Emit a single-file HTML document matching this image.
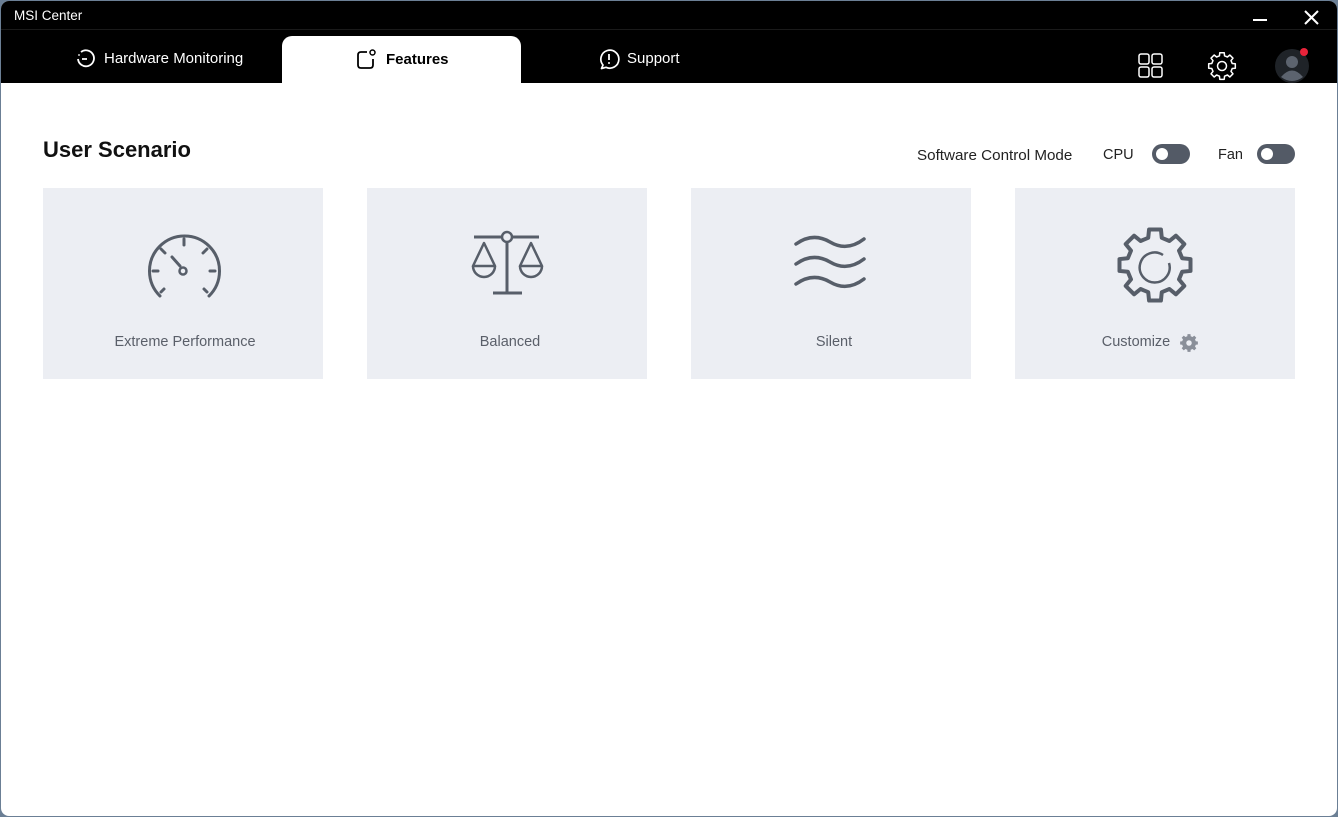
<!DOCTYPE html>
<html><head><meta charset="utf-8"><style>
*{margin:0;padding:0;box-sizing:border-box}
body{width:1338px;height:817px;background:#6b7f95;font-family:"Liberation Sans",sans-serif;overflow:hidden;position:relative}
.win{position:absolute;left:1px;top:1px;width:1336px;height:815px;background:#fff;border-radius:8px;overflow:hidden}
.top{position:absolute;left:0;top:0;width:100%;height:82px;background:#000}
.sep{position:absolute;left:0;top:28px;width:100%;height:1px;background:#1a1a1a}
.t{position:absolute;color:#fff;font-size:14px}
.tab{position:absolute;left:281px;top:35px;width:239px;height:48px;background:#fff;border-radius:10px 10px 0 0}
.card{position:absolute;top:187px;width:280px;height:191px;background:#eceef3}
.lbl{position:absolute;top:146px;width:100%;text-align:center;font-size:14.5px;color:#5a5f69}
.card svg{position:absolute;left:0;top:0}
.tg{position:absolute;top:143px;width:38px;height:20px;border-radius:10px;background:#535a66}
.tg::after{content:"";position:absolute;left:4px;top:4px;width:12px;height:12px;border-radius:50%;background:#fff}
.sm{position:absolute;font-size:14.5px;color:#222;top:146px}
</style></head><body>
<svg width="0" height="0" style="position:absolute"><defs>
<symbol id="gear" viewBox="-40 -40 80 80"><polygon fill="none" stroke="currentColor" stroke-width="4" stroke-linejoin="round" points="-6.77,-27.17 -5.94,-35.5 5.94,-35.5 6.77,-27.17 14.42,-24 20.9,-29.3 29.3,-20.9 24,-14.42 27.17,-6.77 35.5,-5.94 35.5,5.94 27.17,6.77 24,14.42 29.3,20.9 20.9,29.3 14.42,24 6.77,27.17 5.94,35.5 -5.94,35.5 -6.77,27.17 -14.42,24 -20.9,29.3 -29.3,20.9 -24,14.42 -27.17,6.77 -35.5,5.94 -35.5,-5.94 -27.17,-6.77 -24,-14.42 -29.3,-20.9 -20.9,-29.3 -14.42,-24"/></symbol>
</defs></svg>
<div class="win">
<div class="top"></div><div class="sep"></div>
<div class="t" style="left:13px;top:7px;font-size:13.5px">MSI Center</div>
<svg style="position:absolute;left:1250px;top:6px" width="80" height="22"><line x1="2" y1="13" x2="16" y2="13" stroke="#fff" stroke-width="2"/><line x1="54" y1="4" x2="67" y2="17" stroke="#fff" stroke-width="2"/><line x1="67" y1="4" x2="54" y2="17" stroke="#fff" stroke-width="2"/></svg>
<svg style="position:absolute;left:74px;top:47px" width="22" height="22"><path d="M6 4 A8 8 0 1 1 3 11" fill="none" stroke="#fff" stroke-width="1.8"/><line x1="7" y1="11" x2="12" y2="11" stroke="#fff" stroke-width="1.8"/><circle cx="4" cy="7" r="0.9" fill="#fff"/></svg>
<div class="t" style="left:103px;top:49px;font-size:15px">Hardware Monitoring</div>
<div class="tab"></div>
<svg style="position:absolute;left:355px;top:47px" width="22" height="22"><path d="M11 4 H5 Q2 4 2 7 V17 Q2 20 5 20 H14 Q17 20 17 17 V11" fill="none" stroke="#000" stroke-width="1.8"/><circle cx="16.5" cy="4.5" r="2.5" fill="none" stroke="#000" stroke-width="1.5"/></svg>
<div class="t" style="left:385px;top:50px;font-size:15px;color:#000;font-weight:bold">Features</div>
<svg style="position:absolute;left:597px;top:47px" width="22" height="22"><path d="M5 17 A9 9 0 1 1 8 19.3 L3.5 20.5 Z" fill="none" stroke="#fff" stroke-width="1.7" stroke-linejoin="round"/><line x1="11" y1="6" x2="11" y2="12" stroke="#fff" stroke-width="1.8"/><circle cx="11" cy="15" r="1" fill="#fff"/></svg>
<div class="t" style="left:626px;top:49px;font-size:15px">Support</div>
<svg style="position:absolute;left:1136px;top:51px" width="28" height="28"><g fill="none" stroke="#fff" stroke-width="1.5"><rect x="2" y="2" width="10" height="10" rx="2"/><rect x="15" y="2" width="10" height="10" rx="2"/><rect x="2" y="15" width="10" height="10" rx="2"/><rect x="15" y="15" width="10" height="10" rx="2"/></g></svg>
<svg style="position:absolute;left:1206px;top:50px;color:#fff" width="30" height="30"><use href="#gear" width="30" height="30"/><circle cx="15" cy="15" r="4.5" fill="none" stroke="#fff" stroke-width="1.5"/></svg>
<svg style="position:absolute;left:1273px;top:45px" width="40" height="40"><circle cx="18" cy="20" r="17" fill="#1f2328"/><circle cx="18" cy="16" r="6" fill="#5c636e"/><path d="M7 31 Q18 18 29 31 Q18 39 7 31Z" fill="#5c636e"/><circle cx="30" cy="6" r="4" fill="#e8233a"/></svg>
<div style="position:absolute;left:42px;top:136px;font-size:22px;font-weight:bold;color:#111">User Scenario</div>
<div class="sm" style="left:916px;font-size:15.2px">Software Control Mode</div>
<div class="sm" style="left:1102px">CPU</div><div class="tg" style="left:1151px"></div>
<div class="sm" style="left:1217px">Fan</div><div class="tg" style="left:1256px"></div>
<div class="card" style="left:42px"><svg width="280" height="130"><g stroke="#575e69" stroke-width="3" fill="none" stroke-linecap="round"><path d="M117 108 A35 35 0 1 1 166 108"/><line x1="141" y1="51" x2="141" y2="57"/><line x1="118" y1="61" x2="122" y2="65"/><line x1="164" y1="61" x2="160" y2="65"/><line x1="110" y1="83" x2="115" y2="83"/><line x1="172" y1="83" x2="167" y2="83"/><line x1="121" y1="101" x2="118" y2="104"/><line x1="161" y1="101" x2="164" y2="104"/><line x1="129" y1="69" x2="137" y2="78"/><circle cx="140" cy="83" r="3.5" stroke-width="2.5"/></g></svg><div class="lbl" style="left:2px">Extreme Performance</div></div>
<div class="card" style="left:366px"><svg width="280" height="130"><g stroke="#575e69" stroke-width="3" fill="none"><line x1="107" y1="49" x2="135" y2="49"/><line x1="145" y1="49" x2="172" y2="49"/><circle cx="140" cy="49" r="5" stroke-width="2.5"/><line x1="140" y1="54" x2="140" y2="104"/><line x1="126" y1="105" x2="155" y2="105"/><path d="M117 55 L106 78 H128 Z" stroke-width="2.5" stroke-linejoin="round"/><path d="M106 78 A11 11 0 0 0 128 78" stroke-width="2.5"/><path d="M164 55 L153 78 H175 Z" stroke-width="2.5" stroke-linejoin="round"/><path d="M153 78 A11 11 0 0 0 175 78" stroke-width="2.5"/></g></svg><div class="lbl" style="left:3px">Balanced</div></div>
<div class="card" style="left:690px"><svg width="280" height="130"><g stroke="#575e69" stroke-width="3.5" fill="none" stroke-linecap="round"><path d="M105 56 Q122 44 139 54 T173 51"/><path d="M105 76 Q122 64 139 74 T173 71"/><path d="M105 96 Q122 84 139 94 T173 91"/></g></svg><div class="lbl" style="left:3px">Silent</div></div>
<div class="card" style="left:1014px;color:#575e69"><svg width="280" height="130"><use href="#gear" x="100" y="37" width="80" height="80"/><path d="M148 67 A15 15 0 1 0 154 75" fill="none" stroke="#575e69" stroke-width="2.5"/></svg><div class="lbl" style="left:-19px">Customize</div><svg style="position:absolute;left:164px;top:145px;color:#8a8f99" width="20" height="20" viewBox="-40 -40 80 80"><polygon fill="#8a8f99" points="-6.77,-27.17 -5.94,-35.5 5.94,-35.5 6.77,-27.17 14.42,-24 20.9,-29.3 29.3,-20.9 24,-14.42 27.17,-6.77 35.5,-5.94 35.5,5.94 27.17,6.77 24,14.42 29.3,20.9 20.9,29.3 14.42,24 6.77,27.17 5.94,35.5 -5.94,35.5 -6.77,27.17 -14.42,24 -20.9,29.3 -29.3,20.9 -24,14.42 -27.17,6.77 -35.5,5.94 -35.5,-5.94 -27.17,-6.77 -24,-14.42 -29.3,-20.9 -20.9,-29.3 -14.42,-24"/><circle r="11" fill="#eceef3"/></svg></div>
</div>
</body></html>
